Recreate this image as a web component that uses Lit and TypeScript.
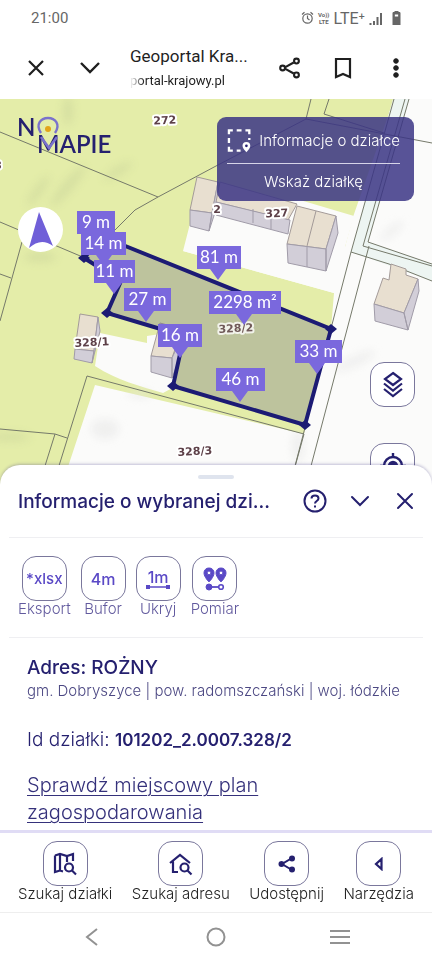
import { LitElement, html, svg, css } from "lit";
import { customElement } from "lit/decorators.js";

const NAVY = "#25206f";

/* Measurement flags: box left, top, width, tip x, label */
const FLAGS: { x: number; y: number; w: number; tip: number; text: string }[] = [
  { x: 77, y: 210, w: 38, tip: 96, text: "9 m" },
  { x: 81, y: 231, w: 45, tip: 104, text: "14 m" },
  { x: 94, y: 259, w: 41, tip: 114, text: "11 m" },
  { x: 124, y: 287, w: 47, tip: 146, text: "27 m" },
  { x: 197, y: 245, w: 44, tip: 218, text: "81 m" },
  { x: 209, y: 290, w: 72, tip: 244, text: "2298 m²" },
  { x: 158, y: 323, w: 44, tip: 180, text: "16 m" },
  { x: 295, y: 339, w: 47, tip: 317, text: "33 m" },
  { x: 216, y: 367, w: 49, tip: 240, text: "46 m" },
];

const NODES = [[84, 257], [107, 312], [173, 385], [305, 424], [331, 328]];

@customElement("parcel-map")
class ParcelMap extends LitElement {
  static styles = css`
    :host { display: block; position: absolute; inset: 0; }
    svg { display: block; width: 100%; height: 100%; }
    .edge { fill: none; stroke: #75796a; stroke-width: 1; }
    .roof { fill: #e8dfd0; stroke: #a39a98; stroke-width: 1; }
    .wall { fill: #d2ced8; stroke: #a09ba8; stroke-width: 1; }
    .green { fill: #e4eda9; }
    .white { fill: #fbfbfa; }
    .parcel { fill: #25206f; fill-opacity: 0.2; stroke: #1c1b74; stroke-width: 4; }
    .node { fill: #1c1b74; }
    .flag { fill: #7a68dd; }
    .flag-text { font: 17px Lato, "Liberation Sans", sans-serif; fill: #fff; text-anchor: middle; }
    .number {
      font: bold 11px "DejaVu Sans", sans-serif; fill: #5d4048; text-anchor: middle;
      stroke: #fff; stroke-width: 4; stroke-linejoin: round; paint-order: stroke;
    }
  `;

  render() {
    return html`<svg viewBox="0 98 432 386" preserveAspectRatio="xMidYMin slice" role="img" aria-label="Mapa działek">
      <defs><filter id="soft" x="-20%" y="-20%" width="140%" height="140%"><feGaussianBlur stdDeviation="4" /></filter></defs>
      <rect class="white" x="0" y="98" width="432" height="386" />
      <path class="green" d="M0 98H394L353 216L345 246L183 250L334 292L331 328L304 433L95 384L62 484H0Z" />
      <path class="white" d="M183 250L192 215L300 199L354 215L345 246L351 251L341 294Z" />
      <path class="white" d="M100 332L147 342V335L160 333L176 385L163 392C140 385 118 380 95 365Z" />
      <path d="M393 98H409L368 241L432 263V280L351 251Z" fill="#edf5f2" />
      <g fill="#c4cf98" opacity=".45" filter="url(#soft)">
        <ellipse cx="68" cy="185" rx="26" ry="5" transform="rotate(-50 68 185)" />
        <ellipse cx="38" cy="190" rx="18" ry="4" transform="rotate(-55 38 190)" />
        <ellipse cx="40" cy="256" rx="16" ry="5" />
        <ellipse cx="10" cy="436" rx="20" ry="4" />
        <ellipse cx="68" cy="110" rx="5" ry="14" />
        <ellipse cx="118" cy="170" rx="16" ry="4" transform="rotate(-30 118 170)" />
      </g>
      <g fill="#e4e4e4" opacity=".5" filter="url(#soft)">
        <ellipse cx="105" cy="428" rx="14" ry="10" />
        <ellipse cx="140" cy="393" rx="12" ry="4" />
        <ellipse cx="355" cy="360" rx="22" ry="5" transform="rotate(-25 355 360)" />
        <ellipse cx="392" cy="230" rx="14" ry="4" transform="rotate(-40 392 230)" />
        <ellipse cx="298" cy="445" rx="6" ry="16" />
      </g>
      <g class="edge">
        <path d="M0 131L158 196L216 165L306 118L432 142M158 196L135 209L114 230M311 98L306 118M329 98L324 113L384 132" />
        <path d="M0 221L85 257M22 241L0 320M0 273L11 277M0 428L55 433L67 437M55 433L39 484M53 484L87 375L304 433L290 484" />
        <path d="M394 98L351 251L290 484M405 98L363 245L432 265M409 98L368 241L432 263M351 251L389 263L432 280M369 245L306 484" />
      </g>
      <path class="roof" d="M197 176L218 181L212 212L190 209Z" />
      <path class="wall" d="M190 209L212 212L209 230L190 225ZM212 212L218 181L220 196L209 230Z" />
      <path class="roof" d="M220 181L297 203L288 219L216 201Z" />
      <path class="wall" d="M216 201L290 219L288 233L216 214ZM253 208V222M271 213V228" />
      <path class="roof" d="M297 205L336 215L326 248L287 243ZM316 210L307 245" />
      <path class="wall" d="M287 243L326 248V270L288 262ZM307 245V266M326 248L336 215L338 232L326 270Z" />
      <path class="roof" d="M383 277L389 279L391 263L406 268V274L418 278L404 312L374 303Z" />
      <path class="wall" d="M374 303L404 312L408 329L375 320ZM404 312L418 278L419 290L408 329Z" />
      <path class="roof" d="M80 313L98 316L94 350L75 348Z" />
      <path class="wall" d="M75 348L94 350L92 362L74 358ZM94 350L98 316L100 330L92 362Z" />
      <path class="roof" d="M160 322L182 328L172 357L151 355Z" />
      <path class="wall" d="M151 355L172 357V377L151 371ZM172 357L180 340V356L172 377Z" />
      <path class="parcel" d="M103 236L331 328L305 424L173 385L184 335L107 312L121 280L84 257Z" />
      ${NODES.map(([x, y]) => svg`<path class="node" d=${`M${x - 6} ${y}L${x} ${y - 5}L${x + 6} ${y}L${x} ${y + 5}Z`} />`)}
      <text class="number" x="165" y="123" transform="rotate(-3 165 123)">272</text>
      <text class="number" x="277" y="216" transform="rotate(-3 277 216)">327</text>
      <text class="number" x="217" y="212">2</text>
      <text class="number" x="-2" y="168">3</text>
      <text class="number" x="92" y="345" transform="rotate(-3 92 345)">328/1</text>
      <text class="number" x="236" y="331" opacity=".8" transform="rotate(-3 236 331)">328/2</text>
      <text class="number" x="195" y="454" transform="rotate(-3 195 454)">328/3</text>
      ${FLAGS.map(
        (f) => svg`<path class="flag" d=${`M${f.x} ${f.y}h${f.w}v23H${f.tip + 8}L${f.tip} ${f.y + 34}L${f.tip - 8} ${f.y + 23}H${f.x}Z`} />
          <text class="flag-text" x=${f.x + f.w / 2} y=${f.y + 17}>${f.text}</text>`
      )}
    </svg>`;
  }
}

@customElement("app-root")
class AppRoot extends LitElement {
  static styles = css`
    :host {
      display: flex; flex-direction: column; min-height: 100vh; background: #fff;
      color: #25206f; font-family: Inter, "Noto Sans", sans-serif; overflow-x: hidden;
    }
    *, *::before { box-sizing: border-box; }
    button { font: inherit; color: inherit; background: none; border: 0; padding: 0; margin: 0; cursor: pointer; }
    svg { display: block; fill: none; stroke: currentColor; }
    h1, h2, p { margin: 0; }

    .status { height: 36px; display: flex; align-items: center; padding: 0 31px; color: #666; font: 15px Roboto, sans-serif; }
    .status .time { flex: 1; }
    .status .signals { display: flex; align-items: center; gap: 4px; }
    .volte { display: grid; font-size: 6px; line-height: 7px; font-weight: 700; text-align: center; }
    .lte { font-size: 16px; }

    .browser { height: 63px; display: flex; align-items: center; padding: 0 21px; color: #1f1f1f; font-family: Roboto, sans-serif; }
    .browser button { width: 30px; height: 40px; display: grid; place-items: center; flex: none; }
    .browser .down { margin-left: 24px; }
    .browser .page { flex: 1; min-width: 0; margin-left: 25px; white-space: nowrap; overflow: hidden; }
    .browser .name { font-size: 17px; line-height: 26px; }
    .browser .host { font-size: 13px; line-height: 24px; mask-image: linear-gradient(90deg, transparent, #000 14px); }
    .browser .actions { display: flex; gap: 23px; }

    .map { position: relative; flex: 1 0 auto; min-height: 386px; overflow: hidden; }
    .logo { position: absolute; left: 16px; top: 14px; }
    .logo text { font: 600 24px Lato, sans-serif; fill: #25206f; stroke: none; }
    .compass {
      position: absolute; left: 18px; top: 108px; width: 45px; height: 45px; border-radius: 50%;
      background: #fff; display: grid; place-items: center; color: #705fd8;
    }
    .info {
      position: absolute; right: 18px; top: 18px; width: 197px; height: 84px; padding: 0 14px 0 10px;
      border-radius: 9px; background: rgb(59 53 133 / 0.85); color: #fff; font-size: 15px; font-weight: 300;
    }
    .info .row { display: flex; align-items: center; gap: 8px; height: 46px; white-space: nowrap; }
    .info .pick { display: block; width: 100%; height: 36px; font-size: 15px; text-align: center; border-top: 1px solid #d6d4e8; }
    .tools { position: absolute; right: 17px; top: 263px; display: grid; gap: 36px; }
    .tile, .tools button {
      width: 45px; height: 45px; border: 1px solid #7a779c; border-radius: 14px; background: #fff;
      display: grid; place-items: center;
    }

    .sheet { position: relative; margin-top: -20px; background: #fff; border-radius: 20px 20px 0 0; box-shadow: 0 -1px 3px rgb(60 50 130 / 0.3); }
    .grip { width: 36px; height: 4px; border-radius: 2px; background: #dfe4ee; margin: 0 auto; transform: translateY(10px); }
    .head { height: 68px; display: flex; align-items: center; padding: 0 15px 4px 18px; }
    .head h1 { flex: 1; min-width: 0; font-size: 19px; font-weight: 500; white-space: nowrap; overflow: hidden; }
    .head .controls { display: flex; gap: 21px; }
    .line { border: 0; height: 1px; background: #efeff2; margin: 0 9px; }
    .chips { display: flex; gap: 10px; padding: 18px 18px 0; height: 99px; }
    .action { display: flex; flex-direction: column; align-items: center; justify-content: flex-start; font-size: 15px; line-height: 16px; font-weight: 300; white-space: nowrap; }
    .chips .action { color: #625a9e; }
    .chips .tile { color: #5a49c6; font-size: 16px; font-weight: 500; }
    .chips .tile.small { font-size: 15px; }
    .details { padding: 16px 27px 4px; }
    .details h2 { font-size: 19px; line-height: 28px; font-weight: 500; }
    .region { font-size: 15px; line-height: 18px; color: #4c4883; font-weight: 300; }
    .parcel-id { font-size: 19px; line-height: 28px; margin-top: 26px; font-weight: 300; }
    .parcel-id b { font-weight: 600; font-size: 17px; }
    .plan { display: block; margin-top: 18px; max-width: 270px; font-size: 20px; line-height: 27px; font-weight: 300; color: #35317b; text-underline-offset: 3px; text-decoration-thickness: 1px; }

    .dock { position: relative; display: flex; justify-content: space-between; height: 82px; padding: 8px 18px 0; border-top: 3px solid #e0dcf5; background: #fff; }
    .dock .action { color: #222; }
    .dock .tile { color: #25206f; }
    .system { height: 48px; border-top: 1px solid #eee; display: flex; justify-content: space-between; align-items: center; padding: 0 80px; color: #929292; }
  `;

  render() {
    return html`
      <div class="status">
        <span class="time">21:00</span>
        <span class="signals">
          <svg width="13" height="14" viewBox="0 0 13 14" stroke-width="1.2"><circle cx="6.5" cy="7.5" r="4.7" /><path d="M6.5 4.5V7.5L8.5 9M1 3.5L3.5 1.3M9.5 1.3L12 3.5" /></svg>
          <span class="volte"><span>Vo))</span><span>LTE</span></span>
          <span class="lte">LTE⁺</span>
          <svg width="14" height="13" viewBox="0 0 14 13" stroke-width="2"><path d="M1.5 11V13M5 9V13M8.5 5V13M12 1V13" /></svg>
          <svg width="14" height="14" viewBox="-5 0 14 14" stroke="none"><path fill="currentColor" fill-rule="evenodd" d="M3 0H6V1.5H8V14H1V1.5H3ZM2.3 3V6H6.7V3Z" /></svg>
        </span>
      </div>

      <header class="browser">
        <button aria-label="Zamknij kartę"><svg width="18" height="18" viewBox="0 0 18 18" stroke-width="2.2"><path d="M2 2L16 16M16 2L2 16" /></svg></button>
        <button class="down" aria-label="Zwiń"><svg width="20" height="12" viewBox="0 0 20 12" stroke-width="2.4"><path d="M1 1L10 10L19 1" /></svg></button>
        <div class="page">
          <div class="name">Geoportal Kra...</div>
          <div class="host">portal-krajowy.pl</div>
        </div>
        <div class="actions">
          <button aria-label="Udostępnij stronę"><svg width="24" height="26" viewBox="0 0 26 26" stroke-width="2.3">
            <path d="M8 12L17 7M8 14L17 19" /><circle cx="20" cy="5.5" r="2.6" /><circle cx="5" cy="13" r="2.6" /><circle cx="20" cy="20.5" r="2.6" /></svg></button>
          <button aria-label="Zakładka"><svg width="18" height="22" viewBox="0 0 18 22" stroke-width="2.2"><path d="M2 2H16V20L9 17L2 20Z" /></svg></button>
          <button aria-label="Więcej"><svg width="6" height="20" viewBox="0 0 6 20" stroke="none"><circle cx="3" cy="3" r="2.3" fill="currentColor" /><circle cx="3" cy="10" r="2.3" fill="currentColor" /><circle cx="3" cy="17" r="2.3" fill="currentColor" /></svg></button>
        </div>
      </header>

      <main class="map">
        <parcel-map></parcel-map>
        <svg class="logo" width="104" height="44" viewBox="0 0 104 44" role="img" aria-label="NOMAPIE">
          <text x="1" y="23">N</text>
          <text x="21" y="40">MAPIE</text>
          <path d="M25 20C19 11 25 5 32 5S45 11 39 20" stroke="#7a72cc" stroke-width="2.4" />
          <path d="M25 24L33 35L41 24" stroke="#7a72cc" stroke-width="2.6" />
          <circle cx="32" cy="16" r="3" fill="#e3a51a" stroke="none" />
        </svg>
        <button class="compass" aria-label="Kompas"><svg width="24" height="36" viewBox="0 0 24 36"><path d="M10 0L24 34Q12 25 0 36Z" fill="currentColor" stroke="none" /></svg></button>
        <section class="info">
          <div class="row">
            <svg width="25" height="25" viewBox="0 0 25 25" stroke-width="2.4">
              <path d="M2 6V2H6M10 2H15M19 2H23V6M23 10V12M2 10V15M2 19V23H6M10 23H14" />
              <path d="M20 14A4 4 0 0 0 16 18C16 21 20 24.500 20 24.500S24 21 24 18A4 4 0 0 0 20 14Z" fill="#fff" stroke="none" /><circle cx="20" cy="18" r="1.4" fill="${NAVY}" stroke="none" />
            </svg>
            <span>Informacje o działce</span>
          </div>
          <button class="pick">Wskaż działkę</button>
        </section>
        <div class="tools">
          <button aria-label="Warstwy"><svg width="22" height="27" viewBox="0 0 22 27" stroke-width="2.2"><path d="M11 2L19 8L11 14L3 8ZM2 12.500L11 19.500L20 12.500M2 18L11 25L20 18" /></svg></button>
          <button aria-label="Moja lokalizacja"><svg width="26" height="26" viewBox="0 0 26 26" stroke-width="2.4"><circle cx="13" cy="13" r="9" /><circle cx="13" cy="13" r="4" fill="currentColor" /><path d="M13 0V4M13 22V26M0 13H4M22 13H26" /></svg></button>
        </div>
      </main>

      <section class="sheet">
        <div class="grip"></div>
        <div class="head">
          <h1>Informacje o wybranej dzi...</h1>
          <div class="controls">
            <button aria-label="Pomoc"><svg width="24" height="24" viewBox="0 0 24 24" stroke-width="2"><circle cx="12" cy="12" r="10.500" /><path d="M8.500 9.500C8.500 5.500 15.500 5.500 15.500 9.500C15.500 12 12 12 12 14.500M12 16.500V18.500" /></svg></button>
            <button aria-label="Zwiń panel"><svg width="24" height="24" viewBox="0 0 24 24" stroke-width="2"><path d="M4 8L12 16L20 8" stroke-linecap="round" /></svg></button>
            <button aria-label="Zamknij panel"><svg width="24" height="24" viewBox="0 0 24 24" stroke-width="2"><path d="M5 5L19 19M19 5L5 19" stroke-linecap="round" /></svg></button>
          </div>
        </div>
        <hr class="line" />
        <div class="chips">
          <button class="action"><span class="tile small">*xlsx</span>Eksport</button>
          <button class="action"><span class="tile">4m</span>Bufor</button>
          <button class="action"><span class="tile"><span>1m<svg width="24" height="4" viewBox="0 0 24 4" stroke-width="1.5"><path d="M2 2H22" /><path d="M0 0H4V4H0ZM20 0H24V4H20Z" fill="currentColor" stroke="none" /></svg></span></span>Ukryj</button>
          <button class="action"><span class="tile"><svg width="24" height="24" viewBox="0 0 24 24" stroke="none">
            <path fill="currentColor" fill-rule="evenodd" d="M6 1A4.800 4.800 0 0 0 1 6C1 10 6 15 6 15S11 10 11 6A4.800 4.800 0 0 0 6 1ZM6 4A1.900 1.900 0 1 1 6 7.800A1.900 1.900 0 0 1 6 4ZM18 1A4.800 4.800 0 0 0 13 6C13 10 18 15 18 15S23 10 23 6A4.800 4.800 0 0 0 18 1ZM18 4A1.900 1.900 0 1 1 18 7.800A1.900 1.900 0 0 1 18 4Z" />
            <circle cx="6" cy="20" r="3" fill="currentColor" /><path d="M6 20H16" stroke="currentColor" stroke-width="1.8" /><circle cx="18" cy="20" r="2.3" stroke="currentColor" stroke-width="1.6" /></svg></span>Pomiar</button>
        </div>
        <hr class="line" />
        <div class="details">
          <h2>Adres: ROŻNY</h2>
          <p class="region">gm. Dobryszyce | pow. radomszczański | woj. łódzkie</p>
          <p class="parcel-id">Id działki: <b>101202_2.0007.328/2</b></p>
          <a class="plan" href="#plan">Sprawdź miejscowy plan zagospodarowania</a>
        </div>
      </section>

      <nav class="dock">
        <button class="action"><span class="tile"><svg width="24" height="24" viewBox="0 0 24 24" stroke-width="2.2"><path d="M2 3.500L7 2L14 4L20 2V9M2 3.500V20L7 18.500V2M14 4V10M7 18.500L10 19.500" /><circle cx="16" cy="15.500" r="4" /><path d="M19 18.500L23 22.500" /></svg></span>Szukaj działki</button>
        <button class="action"><span class="tile"><svg width="24" height="24" viewBox="0 0 24 24" stroke-width="2.2"><path d="M1 11L11 3L21 11M4 9.500V20H9" /><circle cx="15.500" cy="15.500" r="4" /><path d="M18.500 18.500L22.500 22.500" /></svg></span>Szukaj adresu</button>
        <button class="action"><span class="tile"><svg width="18" height="18" viewBox="0 0 18 18" stroke-width="2"><path d="M14 3L4 9L14 15" /><g fill="currentColor" stroke="none"><circle cx="14" cy="3.500" r="3" /><circle cx="3.500" cy="9" r="3" /><circle cx="14" cy="14.500" r="3" /></g></svg></span>Udostępnij</button>
        <button class="action"><span class="tile"><svg width="10" height="14" viewBox="0 0 10 14" stroke-width="2.2"><path d="M7.500 2V12L2 7Z" /></svg></span>Narzędzia</button>
      </nav>

      <nav class="system">
        <button aria-label="Wstecz"><svg width="24" height="20" viewBox="0 0 24 20" stroke-width="2"><path d="M17 2L7 10L17 18" /></svg></button>
        <button aria-label="Ekran główny"><svg width="20" height="20" viewBox="0 0 20 20" stroke-width="2"><circle cx="10" cy="10" r="8.500" /></svg></button>
        <button aria-label="Ostatnie"><svg width="24" height="20" viewBox="0 0 24 20" stroke-width="2"><path d="M2 4H22M2 10H22M2 16H22" /></svg></button>
      </nav>
    `;
  }
}
